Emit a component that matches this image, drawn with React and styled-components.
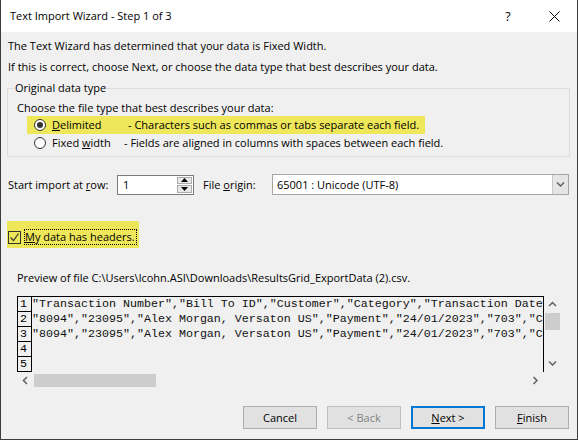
import React from 'react';
import styled, { createGlobalStyle } from 'styled-components';

const GlobalStyle = createGlobalStyle`
  html, body { margin: 0; padding: 0; background: #f0f0f0; }
  body {
    font-family: "Open Sans", "Noto Sans", sans-serif;
    font-size: 11px;
    color: #000;
  }
  * { box-sizing: border-box; }
`;

const Window = styled.div`
  width: 578px;
  height: 440px;
  display: flex;
  flex-direction: column;
  border: 1px solid #3c3c3c;
  border-top: none;
  background: #f0f0f0;
  overflow: hidden;
`;

const TitleBar = styled.div`
  height: 32px;
  flex: none;
  background: #fff;
  display: flex;
  align-items: center;
`;

const Title = styled.div`
  flex: 1;
  padding-left: 9px;
  line-height: 16px;
  white-space: nowrap;
`;

const CaptionButton = styled.div`
  width: 46px;
  height: 32px;
  display: flex;
  align-items: center;
  justify-content: center;
  font-size: 12.5px;
`;

const Body = styled.div`
  flex: 1;
  display: flex;
  flex-direction: column;
  padding: 6px 8px 0 7px;
`;

const Line = styled.div`
  line-height: 16px;
  margin-bottom: 5px;
  white-space: nowrap;
`;

const GroupBox = styled.fieldset`
  margin: 0 -1px;
  padding: 4px 0 4px 0;
  border: 1px solid #dcdcdc;
  min-width: 0;
`;

const Legend = styled.legend`
  margin-left: 6px;
  padding: 0 1px;
  line-height: 16px;
`;

const Prompt = styled.div`
  margin-left: 9px;
  line-height: 16px;
`;

const RadioRow = styled.div`
  display: flex;
  align-items: center;
  height: 18px;
  width: fit-content;
  margin-left: 19px;
  padding: 0 6px 0 7px;
  background: ${p => (p.$marked ? '#efe75a' : 'transparent')};
  white-space: nowrap;
`;

const RadioDot = styled.span`
  width: 12px;
  height: 12px;
  border-radius: 50%;
  border: 1px solid #333;
  background: #fff;
  display: flex;
  align-items: center;
  justify-content: center;
  margin-right: 6px;
  flex: none;
  &::after {
    content: '';
    width: 6px;
    height: 6px;
    border-radius: 50%;
    background: ${p => (p.$on ? '#333' : 'transparent')};
  }
`;

const OptionLabel = styled.span`
  width: ${p => p.$w}px;
  line-height: 16px;
`;

const OptionDesc = styled.span`
  line-height: 16px;
`;

const ImportRow = styled.div`
  display: flex;
  align-items: center;
  margin-top: 17px;
  height: 21px;
`;

const FieldLabel = styled.span`
  width: ${p => p.$w}px;
  margin-left: ${p => p.$ml || 0}px;
  flex: none;
  white-space: nowrap;
  line-height: 16px;
`;

const SpinBox = styled.div`
  width: 77px;
  height: 20px;
  border: 1px solid #7a7a7a;
  background: #fff;
  display: flex;
  flex: none;
`;

const SpinValue = styled.div`
  flex: 1;
  padding-left: 5px;
  line-height: 18px;
`;

const SpinButtons = styled.div`
  width: 17px;
  display: flex;
  flex-direction: column;
  padding: 1px;
  gap: 1px;
`;

const SpinButton = styled.div`
  flex: 1;
  border: 1px solid #adadad;
  background: #e8e8e8;
  display: flex;
  align-items: center;
  justify-content: center;
`;

const Select = styled.div`
  flex: 1;
  height: 21px;
  border: 1px solid #a5a5a5;
  background: #fff;
  display: flex;
`;

const SelectValue = styled.div`
  flex: 1;
  padding-left: 4px;
  line-height: 19px;
`;

const SelectButton = styled.div`
  width: 16px;
  background: #e5e5e5;
  border-left: 1px solid #c8c8c8;
  display: flex;
  align-items: center;
  justify-content: center;
`;

const HeaderCheckRow = styled.div`
  display: flex;
  align-items: center;
  width: fit-content;
  margin: 26px 0 0 -1px;
  padding: 8px 2px 3px 1px;
  background: #efe75a;
`;

const CheckBox = styled.span`
  width: 13px;
  height: 13px;
  border: 1px solid #333;
  display: flex;
  align-items: center;
  justify-content: center;
  margin-right: 3px;
  flex: none;
`;

const FocusLabel = styled.span`
  border: 1px dotted #000;
  padding: 0 1px 0 0;
  line-height: 14px;
  white-space: nowrap;
`;

const PreviewCaption = styled.div`
  margin: 22px 0 0 9px;
  line-height: 16px;
  white-space: nowrap;
`;

const PreviewGrid = styled.div`
  margin: 10px 0 0 9px;
  display: grid;
  grid-template-columns: 527px 17px;
  grid-template-rows: 76px 16px;
`;

const PreviewBox = styled.div`
  border: 1px solid #000;
  border-bottom: none;
  background: #f0f0f0;
  overflow: hidden;
  display: flex;
  flex-direction: column;
`;

const PreviewRow = styled.div`
  display: flex;
  height: 15px;
  flex: none;
`;

const Gutter = styled.span`
  width: 14px;
  flex: none;
  border-right: 1px solid #000;
  border-bottom: 1px solid #000;
  padding-left: 2px;
  font-family: "Liberation Mono", "Courier New", monospace;
  font-size: 11.66px;
  line-height: 14px;
`;

const Code = styled.span`
  font-family: "Liberation Mono", "Courier New", monospace;
  font-size: 11.66px;
  line-height: 15px;
  white-space: pre;
  color: #111;
`;

const VScroll = styled.div`
  display: flex;
  flex-direction: column;
  align-items: center;
`;

const ScrollArrow = styled.div`
  width: 17px;
  height: ${p => p.$h || 17}px;
  display: flex;
  align-items: center;
  justify-content: center;
  flex: none;
`;

const VThumb = styled.div`
  width: 15px;
  height: 17px;
  background: #cdcdcd;
`;

const ScrollSpace = styled.div`
  flex: 1;
`;

const HScroll = styled.div`
  display: flex;
  align-items: center;
`;

const HThumb = styled.div`
  width: 122px;
  height: 13px;
  background: #cdcdcd;
`;

const ButtonRow = styled.div`
  display: flex;
  justify-content: flex-end;
  gap: 10px;
  margin-top: 18px;
`;

const DialogButton = styled.div`
  width: 74px;
  height: 23px;
  display: flex;
  align-items: center;
  justify-content: center;
  background: #e1e1e1;
  border: ${p => (p.$default ? '2px solid #0078d7' : p.$disabled ? '1px solid #bfbfbf' : '1px solid #adadad')};
  color: ${p => (p.$disabled ? '#838383' : '#000')};
`;

const Chevron = ({ dir }) => {
  const pts = {
    up: '1,5 4.5,1.5 8,5',
    down: '1,1.5 4.5,5 8,1.5',
    left: '5,1 1.5,4.5 5,8',
    right: '1.5,1 5,4.5 1.5,8',
  }[dir];
  const horizontal = dir === 'left' || dir === 'right';
  return (
    <svg width={horizontal ? 7 : 9} height={horizontal ? 9 : 7} viewBox={horizontal ? '0 0 7 9' : '0 0 9 7'}>
      <polyline points={pts} fill="none" stroke="#606060" strokeWidth="1.5" />
    </svg>
  );
};

const Triangle = ({ up }) => (
  <svg width="7" height="4" viewBox="0 0 7 4">
    <polygon points={up ? '0,4 3.5,0 7,4' : '0,0 3.5,4 7,0'} fill="#000" />
  </svg>
);

// what fits in the visible width of the preview pane
const previewLines = [
  '"Transaction Number","Bill To ID","Customer","Category","Transaction Date',
  '"8094","23095","Alex Morgan, Versaton US","Payment","24/01/2023","703","C',
  '"8094","23095","Alex Morgan, Versaton US","Payment","24/01/2023","703","C',
  '',
  '',
];

export default function App() {
  return (
    <>
      <GlobalStyle />
      <Window>
        <TitleBar>
          <Title>Text Import Wizard - Step 1 of 3</Title>
          <CaptionButton>?</CaptionButton>
          <CaptionButton>
            <svg width="11" height="11" viewBox="0 0 11 11">
              <path d="M0.5 0.5 L10.5 10.5 M10.5 0.5 L0.5 10.5" stroke="#000" strokeWidth="1" />
            </svg>
          </CaptionButton>
        </TitleBar>
        <Body>
          <Line>The Text Wizard has determined that your data is Fixed Width.</Line>
          <Line>If this is correct, choose Next, or choose the data type that best describes your data.</Line>
          <GroupBox>
            <Legend>Original data type</Legend>
            <Prompt>Choose the file type that best describes your data:</Prompt>
            <RadioRow $marked>
              <RadioDot $on />
              <OptionLabel $w={76}><u>D</u>elimited</OptionLabel>
              <OptionDesc>- Characters such as commas or tabs separate each field.</OptionDesc>
            </RadioRow>
            <RadioRow>
              <RadioDot />
              <OptionLabel $w={72}>Fixed <u>w</u>idth</OptionLabel>
              <OptionDesc>- Fields are aligned in columns with spaces between each field.</OptionDesc>
            </RadioRow>
          </GroupBox>
          <ImportRow>
            <FieldLabel $w={109}>Start import at <u>r</u>ow:</FieldLabel>
            <SpinBox>
              <SpinValue>1</SpinValue>
              <SpinButtons>
                <SpinButton><Triangle up /></SpinButton>
                <SpinButton><Triangle /></SpinButton>
              </SpinButtons>
            </SpinBox>
            <FieldLabel $w={69} $ml={9}>File <u>o</u>rigin:</FieldLabel>
            <Select>
              <SelectValue>65001 : Unicode (UTF-8)</SelectValue>
              <SelectButton><Chevron dir="down" /></SelectButton>
            </Select>
          </ImportRow>
          <HeaderCheckRow>
            <CheckBox>
              <svg width="11" height="11" viewBox="0 0 11 11">
                <polyline points="1.5,5.5 4.5,8.5 9.5,1.5" fill="none" stroke="#333" strokeWidth="1.2" />
              </svg>
            </CheckBox>
            <FocusLabel><u>M</u>y data has headers.</FocusLabel>
          </HeaderCheckRow>
          <PreviewCaption>
            {'Preview of file C:\\Users\\lcohn.ASI\\Downloads\\ResultsGrid_ExportData (2).csv.'}
          </PreviewCaption>
          <PreviewGrid>
            <PreviewBox>
              {previewLines.map((text, i) => (
                <PreviewRow key={i}>
                  <Gutter>{i + 1}</Gutter>
                  <Code>{text}</Code>
                </PreviewRow>
              ))}
            </PreviewBox>
            <VScroll>
              <ScrollArrow><Chevron dir="up" /></ScrollArrow>
              <VThumb />
              <ScrollSpace />
              <ScrollArrow><Chevron dir="down" /></ScrollArrow>
            </VScroll>
            <HScroll>
              <ScrollArrow $h={16}><Chevron dir="left" /></ScrollArrow>
              <HThumb />
              <ScrollSpace />
              <ScrollArrow $h={16}><Chevron dir="right" /></ScrollArrow>
            </HScroll>
            <div />
          </PreviewGrid>
          <ButtonRow>
            <DialogButton>Cancel</DialogButton>
            <DialogButton $disabled>&lt; Back</DialogButton>
            <DialogButton $default><span><u>N</u>ext &gt;</span></DialogButton>
            <DialogButton><span><u>F</u>inish</span></DialogButton>
          </ButtonRow>
        </Body>
      </Window>
    </>
  );
}
